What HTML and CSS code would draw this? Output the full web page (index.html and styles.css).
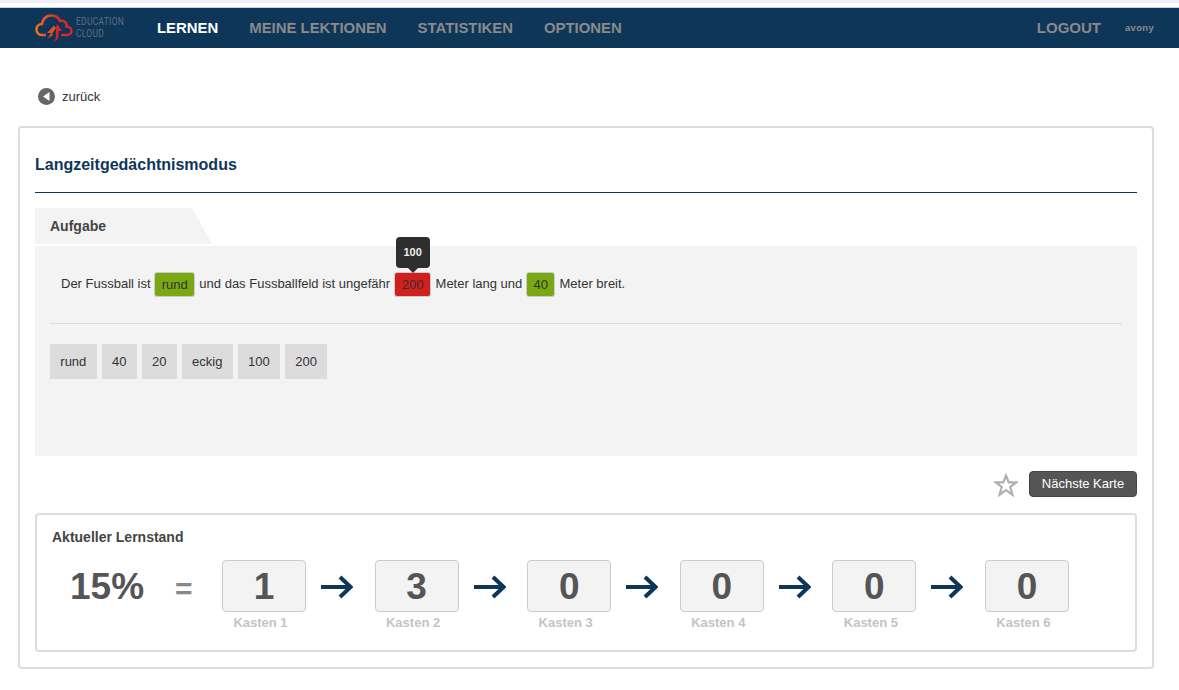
FILE: index.html
```html
<!DOCTYPE html>
<html lang="de">
<head>
<meta charset="utf-8">
<title>Langzeitgedächtnismodus</title>
<link rel="stylesheet" href="styles.css">
</head>
<body>
<div class="topstrip"></div>
<header class="nav">
  <a class="logo">
    <svg class="logo-icon" width="38" height="29" viewBox="0 0 38 29" fill="none">
      <defs><linearGradient id="lg" x1="0" x2="1" y1="0" y2="0"><stop offset="0" stop-color="#ee7420"/><stop offset=".6" stop-color="#dc2c28"/><stop offset="1" stop-color="#d8232a"/></linearGradient></defs>
      <path d="M11 21H7C3.500 21 1.500 18.500 1.500 15.500C1.500 12.500 3.500 10 7 10C8 5 11.500 1.500 16.500 1.500C20.500 1.500 23.500 3.500 25 7C26.500 6.500 28 6.500 29.500 7.500C31.500 9 32 11 31.500 12.500C34.500 12.500 36.500 14.500 36.500 17C36.500 19.500 34.500 21 32 21H26" stroke="url(#lg)" stroke-width="2.400"/>
      <path d="M19 11.500L12 19H16L12.500 24.500L19 20.500H16.500L21 14Z" fill="#e8501e"/>
      <path d="M22 10L27 17H23.500V23C23 25.500 20 27.500 17.500 28C20 26.500 21 24.500 21 22V14Z" fill="#d8232a"/>
    </svg>
    <span class="logo-text">EDUCATION<br>CLOUD</span>
  </a>
  <nav class="menu">
    <a class="menu-item active">LERNEN</a>
    <a class="menu-item">MEINE LEKTIONEN</a>
    <a class="menu-item">STATISTIKEN</a>
    <a class="menu-item">OPTIONEN</a>
  </nav>
  <a class="menu-item logout">LOGOUT</a>
  <span class="user">avony</span>
</header>

<a class="back">
  <svg width="17" height="17" viewBox="0 0 17 17"><circle cx="8.500" cy="8.500" r="8.500" fill="#666"/><path d="M11.500 4V13L5 8.500Z" fill="#fff"/></svg>
  <span>zurück</span>
</a>

<main class="card">
  <h1 class="title">Langzeitgedächtnismodus</h1>
  <div class="tab-head">
    <svg class="tab-shape" width="177" height="36" viewBox="0 0 177 36" preserveAspectRatio="none"><path d="M0 0H157L177 36H0Z" fill="#f3f3f3"/></svg>
    <span class="tab-label">Aufgabe</span>
  </div>
  <section class="panel">
    <p class="sentence">Der Fussball ist <span class="gap green">rund</span> und das Fussballfeld ist ungefähr <span class="gap red">200<span class="tip">100</span></span> Meter lang und <span class="gap green">40</span> Meter breit.</p>
    <div class="rule"></div>
    <div class="chips">
      <span class="chip">rund</span>
      <span class="chip">40</span>
      <span class="chip">20</span>
      <span class="chip">eckig</span>
      <span class="chip">100</span>
      <span class="chip">200</span>
    </div>
  </section>
  <div class="actions">
    <svg class="star" width="24" height="24" viewBox="0 0 24 24"><path d="M12 2.500L14.700 9.300H22.300L16.200 14L18.500 21.800L12 17.200L5.500 21.800L7.800 14L1.700 9.300H9.300Z" fill="none" stroke="#b0b0b0" stroke-width="2.200"/></svg>
    <button class="next">Nächste Karte</button>
  </div>
  <section class="progress">
    <h2 class="progress-title">Aktueller Lernstand</h2>
    <div class="progress-row">
      <span class="percent">15%</span>
      <span class="equals">=</span>
      <div class="boxes">
        <div class="kasten"><div class="num">1</div><div class="label">Kasten 1</div></div>
        <svg class="arrow" width="33" height="24" viewBox="0 0 33 24"><path d="M1 12H30M20 2L30.500 12L20 22" fill="none" stroke="#0e3659" stroke-width="4"/></svg>
        <div class="kasten"><div class="num">3</div><div class="label">Kasten 2</div></div>
        <svg class="arrow" width="33" height="24" viewBox="0 0 33 24"><path d="M1 12H30M20 2L30.500 12L20 22" fill="none" stroke="#0e3659" stroke-width="4"/></svg>
        <div class="kasten"><div class="num">0</div><div class="label">Kasten 3</div></div>
        <svg class="arrow" width="33" height="24" viewBox="0 0 33 24"><path d="M1 12H30M20 2L30.500 12L20 22" fill="none" stroke="#0e3659" stroke-width="4"/></svg>
        <div class="kasten"><div class="num">0</div><div class="label">Kasten 4</div></div>
        <svg class="arrow" width="33" height="24" viewBox="0 0 33 24"><path d="M1 12H30M20 2L30.500 12L20 22" fill="none" stroke="#0e3659" stroke-width="4"/></svg>
        <div class="kasten"><div class="num">0</div><div class="label">Kasten 5</div></div>
        <svg class="arrow" width="33" height="24" viewBox="0 0 33 24"><path d="M1 12H30M20 2L30.500 12L20 22" fill="none" stroke="#0e3659" stroke-width="4"/></svg>
        <div class="kasten"><div class="num">0</div><div class="label">Kasten 6</div></div>
      </div>
    </div>
  </section>
</main>
</body>
</html>
```
FILE: styles.css
```css
* { box-sizing: border-box; }
html, body { margin: 0; padding: 0; background: #fff; }
body { font-family: "Liberation Sans", Arial, sans-serif; font-size: 12px; color: #333; height: 690px; overflow: hidden; }

.topstrip { height: 3px; background: #f1f2f5; margin-bottom: 4px; }
.nav { height: 41px; border-top: 1px solid #c9d2da; background: #0e3659; display: flex; align-items: center; padding: 0 25px 0 35px; }
.logo { display: flex; align-items: center; gap: 3px; width: 122px; }
.logo-icon { flex: none; }
.logo-text { font-family: "Roboto", "Liberation Sans", sans-serif; font-size: 10.500px; line-height: 12px; color: #5e6f7e; margin-top: -1px; transform: scaleX(.8); transform-origin: left; letter-spacing: .4px; white-space: nowrap; }
.menu { display: flex; gap: 31px; flex: 1; }
.menu-item { font-size: 14.900px; font-weight: 700; color: #8a8a8a; line-height: 20px; margin-top: -1px; }
.menu-item.active { color: #fff; }
.logout { margin-right: 24px; font-size: 15px; }
.user { font-size: 9.500px; font-weight: 700; color: #8a8a8a; letter-spacing: .3px; margin-top: -1px; }

.back { display: flex; align-items: center; gap: 7px; margin: 39px 0 0 38px; height: 18px; font-size: 13px; color: #333; }

.card { margin: 21px 25px 0 18px; height: 543px; border: 2px solid #ddd; border-radius: 4px; padding: 0 15px; }
.title { margin: 0; height: 65px; padding-top: 27px; font-size: 16px; line-height: 19px; font-weight: 700; color: #0e3659; border-bottom: 1px solid #0e3659; }
.tab-head { position: relative; height: 36px; margin-top: 15px; }
.tab-shape { display: block; }
.tab-label { position: absolute; left: 15px; top: 10px; font-size: 14px; line-height: 17px; font-weight: 700; color: #444; }
.panel { margin-top: 2px; height: 210px; background: #f3f3f3; padding: 26px 15px 0; }
.sentence { margin: 0 0 0 11px; height: 26px; line-height: 23px; white-space: nowrap; font-size: 13px; color: #333; }
.gap { position: relative; display: inline-block; vertical-align: top; height: 25px; line-height: 24px; padding: 0 6.500px; margin: 0 .5px 0 0; border: 1px solid #ccc; border-radius: 3px; font-size: 13px; color: #333; }
.green { background: #7aa813; }
.red { background: #d0201d; padding: 0 7px; }
.tip { position: absolute; left: 50%; bottom: 100%; margin-bottom: 5px; transform: translateX(-50%); width: 34px; height: 31px; line-height: 30px; text-align: center; background: #2e2e2e; border-radius: 4px; color: #eee; font-size: 11px; font-weight: 700; }
.tip::after { content: ""; position: absolute; left: 50%; top: 100%; margin-left: -5px; border: 5px solid transparent; border-top-color: #2e2e2e; border-bottom: 0; }
.rule { height: 1px; background: #ddd; margin-top: 25px; }
.chips { display: flex; gap: 5px; margin-top: 20px; }
.chip { height: 35px; padding: 0 10.300px; display: flex; align-items: center; background: #dcdcdc; font-size: 13px; color: #333; }

.actions { display: flex; justify-content: flex-end; align-items: center; gap: 11px; margin-top: 15px; height: 26px; }
.star { margin-top: 2px; }
.next { width: 108px; height: 26px; padding: 0 0 1px; border: 1px solid #444; border-radius: 4px; background: #555; color: #fff; font-family: inherit; font-size: 13px; }

.progress { margin-top: 16px; height: 139px; border: 2px solid #ddd; border-radius: 4px; padding: 0 15px; }
.progress-title { margin: 0; padding-top: 14px; font-size: 14px; line-height: 16px; font-weight: 700; color: #444; }
.progress-row { display: flex; align-items: flex-start; margin-top: 15px; }
.percent { width: 105px; margin-left: 18px; margin-top: 6px; font-size: 37px; line-height: 41px; font-weight: 700; color: #555; }
.equals { width: 47px; margin-top: 8px; font-size: 30px; line-height: 41px; font-weight: 700; color: #888; }
.boxes { display: flex; align-items: flex-start; }
.kasten { width: 84px; flex: none; }
.num { height: 52px; border: 1px solid #ccc; border-radius: 4px; background: #f3f3f3; text-align: center; font-size: 37px; line-height: 51px; font-weight: 700; color: #555; }
.label { margin-top: 3px; padding-right: 7px; text-align: center; font-size: 13px; line-height: 15px; font-weight: 700; color: #c4c4c4; }
.arrow { flex: none; margin: 15px 21.600px 0 14px; }
```
